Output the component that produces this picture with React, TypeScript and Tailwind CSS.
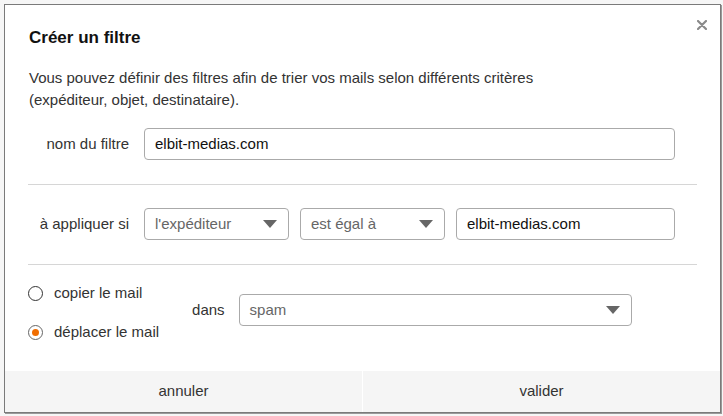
import React from "react";

const Caret = () => (
  <svg width="14" height="8" viewBox="0 0 14 8" className="shrink-0">
    <path d="M0 0 L14 0 L7 8 Z" fill="#666" />
  </svg>
);

const Select = ({ value, className }: { value: string; className: string }) => (
  <div
    className={
      "h-8 flex items-center justify-between pl-[10px] pr-[11px] border border-[#aaa] rounded-[4px] bg-white text-[15px] text-[#666] " +
      className
    }
  >
    <span>{value}</span>
    <Caret />
  </div>
);

const Radio = ({ checked }: { checked?: boolean }) => (
  <span
    className={
      "w-[15px] h-[15px] rounded-full border flex items-center justify-center bg-white " +
      (checked ? "border-[#666]" : "border-[#333]")
    }
  >
    {checked && <span className="w-[7px] h-[7px] rounded-full bg-[#f06d00]" />}
  </span>
);

const App = () => {
  return (
    <div
      className="min-h-[416px] bg-[#f6f6f6] pt-[4px] pl-[4px]"
      style={{ fontFamily: '"Liberation Sans", Arial, sans-serif' }}
    >
      <div className="relative w-[717px] h-[409px] bg-white border border-[#7a7a7a] shadow-[1px_1px_0_#9a9a9a] flex flex-col">
        <button className="absolute top-[10px] right-[8px] w-5 h-5 flex items-center justify-center">
          <svg width="10" height="10" viewBox="0 0 10 10">
            <path d="M1 1 L9 9 M9 1 L1 9" stroke="#8a8a8a" strokeWidth="2.2" strokeLinecap="round" />
          </svg>
        </button>

        <div className="flex-1 pl-[23px] pr-[23px] pt-[23px]">
          <h1 className="text-[17px] leading-5 font-bold text-[#111] pl-[1px]">Créer un filtre</h1>

          <p className="mt-[19px] text-[15px] leading-[22px] text-[#333] pl-[1px]">
            Vous pouvez définir des filtres afin de trier vos mails selon différents critères
            <br />
            (expéditeur, objet, destinataire).
          </p>

          <div className="mt-[17px] flex items-center pr-[22px]">
            <label className="w-[101px] text-right text-[15px] text-[#333]">nom du filtre</label>
            <div className="ml-[15px] flex-1 h-8 flex items-center pl-[10px] border border-[#aaa] rounded-[4px] text-[15px] text-[#111]">
              elbit-medias.com
            </div>
          </div>

          <div className="my-6 h-px bg-[#d6d6d6]" />

          <div className="flex items-center pr-[22px] -mt-px">
            <label className="w-[101px] text-right text-[15px] text-[#333]">à appliquer si</label>
            <Select value="l'expéditeur" className="ml-[15px] w-[145px]" />
            <Select value="est égal à" className="ml-[11px] w-[145px]" />
            <div className="ml-[11px] flex-1 h-8 flex items-center pl-[10px] border border-[#aaa] rounded-[4px] text-[15px] text-[#111]">
              elbit-medias.com
            </div>
          </div>

          <div className="mt-6 h-px bg-[#d6d6d6]" />

          <div className="flex items-center pt-4">
            <div className="flex flex-col gap-[15px]">
              <div className="h-6 flex items-center gap-[11px] text-[15px] text-[#333]">
                <Radio />
                <span>copier le mail</span>
              </div>
              <div className="h-6 flex items-center gap-[11px] text-[15px] text-[#333]">
                <Radio checked />
                <span>déplacer le mail</span>
              </div>
            </div>
            <span className="ml-[33px] text-[15px] text-[#333] -mt-[5px]">dans</span>
            <Select value="spam" className="ml-[14px] w-[393px] -mt-[5px]" />
          </div>
        </div>

        <div className="h-[41px] flex bg-[#f5f5f5] text-[15px] text-[#333]">
          <button className="flex-1 flex items-center justify-center">annuler</button>
          <div className="w-px bg-white" />
          <button className="flex-1 flex items-center justify-center">valider</button>
        </div>
      </div>
    </div>
  );
};

export default App;
